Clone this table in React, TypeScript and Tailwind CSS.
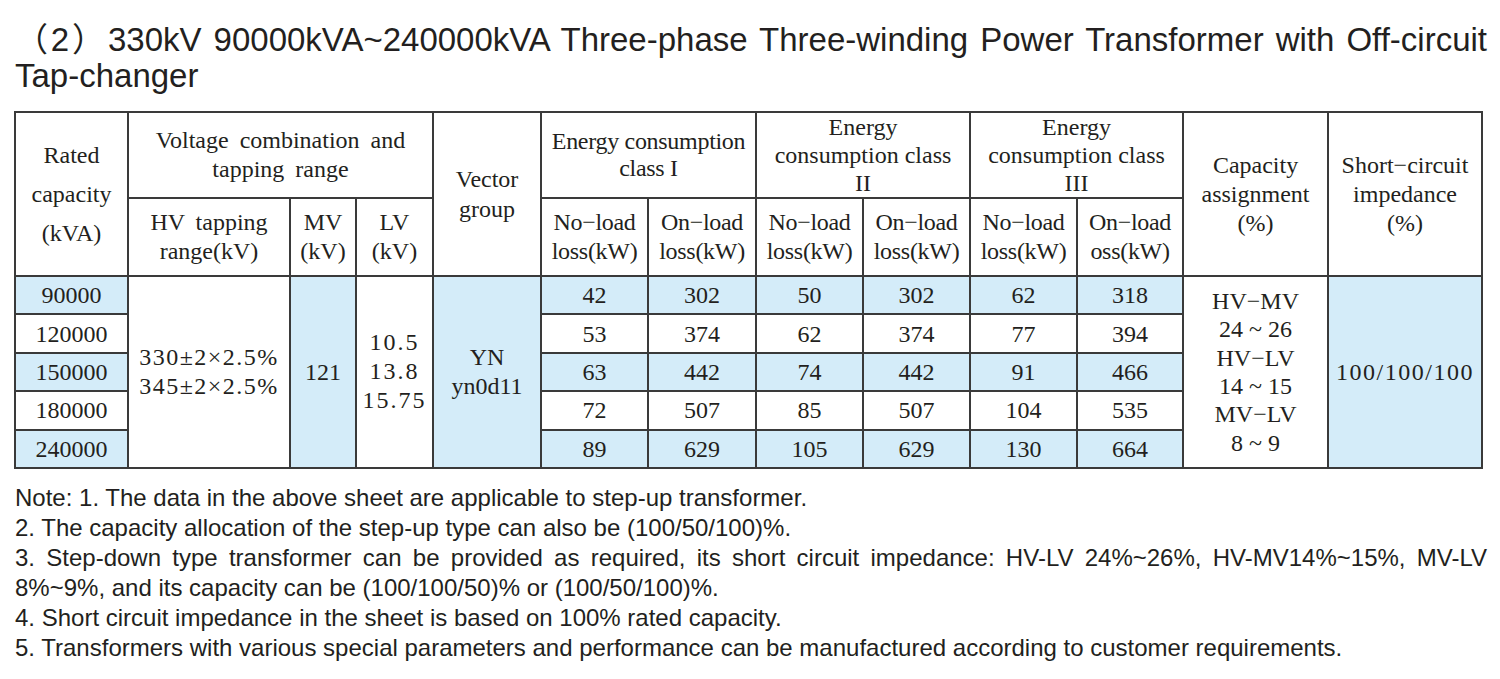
import React from "react"

const serif = "font-['Liberation_Serif','DejaVu_Serif',serif]"
const blue = "bg-[#d4ecf9]"
const cell = "border-2 border-[#3a3a3a] text-center align-middle p-0 font-normal"

const rows = [
  { cap: "90000", v: ["42", "302", "50", "302", "62", "318"] },
  { cap: "120000", v: ["53", "374", "62", "374", "77", "394"] },
  { cap: "150000", v: ["63", "442", "74", "442", "91", "466"] },
  { cap: "180000", v: ["72", "507", "85", "507", "104", "535"] },
  { cap: "240000", v: ["89", "629", "105", "629", "130", "664"] },
]

const widths = [113, 162, 66, 77, 108, 107, 108, 107, 107, 107, 106, 145, 154]

export default function App() {
  return (
    <div className="w-[1500px] h-[679px] bg-white text-[#231f20] pt-[22px] pl-[14px] pr-[13px]">
      <h1 className="font-['Liberation_Sans',Arial,'Noto_Sans_CJK_SC',sans-serif] text-[33px] leading-[36px] font-normal pl-[1px]">
        <span className="block text-justify [text-justify:inter-word] [text-align-last:justify]">
          （2）330kV 90000kVA~240000kVA Three-phase Three-winding Power Transformer with Off-circuit
        </span>
        <span className="block">Tap-changer</span>
      </h1>

      <table className={`mt-[17px] border-collapse table-fixed w-[1467px] ${serif} text-[24px]`}>
        <colgroup>
          {widths.map((w, i) => (
            <col key={i} style={{ width: w }} />
          ))}
        </colgroup>
        <thead>
          <tr className="h-[84px]">
            <th rowSpan={2} className={`${cell} leading-[39px]`}>
              Rated
              <br />
              capacity
              <br />
              (kVA)
            </th>
            <th colSpan={3} className={`${cell} leading-[29px] [word-spacing:5px]`}>
              Voltage combination and
              <br />
              tapping range
            </th>
            <th rowSpan={2} className={`${cell} leading-[30px]`}>
              Vector
              <br />
              group
            </th>
            <th colSpan={2} className={`${cell} leading-[27px] tracking-[-0.3px]`}>
              Energy consumption
              <br />
              class I
            </th>
            <th colSpan={2} className={`${cell} leading-[28px]`}>
              Energy
              <br />
              consumption class
              <br />
              II
            </th>
            <th colSpan={2} className={`${cell} leading-[28px]`}>
              Energy
              <br />
              consumption class
              <br />
              III
            </th>
            <th rowSpan={2} className={`${cell} leading-[29px]`}>
              Capacity
              <br />
              assignment
              <br />
              (%)
            </th>
            <th rowSpan={2} className={`${cell} leading-[29px]`}>
              Short−circuit
              <br />
              impedance
              <br />
              (%)
            </th>
          </tr>
          <tr className="h-[78px]">
            <th className={`${cell} leading-[29px] [word-spacing:5px]`}>
              HV tapping
              <br />
              range(kV)
            </th>
            <th className={`${cell} leading-[29px]`}>
              MV
              <br />
              (kV)
            </th>
            <th className={`${cell} leading-[29px]`}>
              LV
              <br />
              (kV)
            </th>
            {["loss(kW)", "loss(kW)", "loss(kW)", "loss(kW)", "loss(kW)", "oss(kW)"].map((l, i) => (
              <th key={i} className={`${cell} leading-[29px] tracking-[-0.3px]`}>
                {i % 2 === 0 ? "No−load" : "On−load"}
                <br />
                {l}
              </th>
            ))}
          </tr>
        </thead>
        <tbody>
          {rows.map((r, i) => {
            const bg = i % 2 === 0 ? blue : "bg-white"
            return (
              <tr key={r.cap} className="h-[38.4px]">
                <td className={`${cell} ${bg}`}>{r.cap}</td>
                {i === 0 && (
                  <>
                    <td rowSpan={5} className={`${cell} bg-white leading-[29px] tracking-[1.5px]`}>
                      330±2×2.5%
                      <br />
                      345±2×2.5%
                    </td>
                    <td rowSpan={5} className={`${cell} ${blue}`}>
                      121
                    </td>
                    <td rowSpan={5} className={`${cell} bg-white leading-[29px] tracking-[2px]`}>
                      10.5
                      <br />
                      13.8
                      <br />
                      15.75
                    </td>
                    <td rowSpan={5} className={`${cell} ${blue} leading-[29px]`}>
                      YN
                      <br />
                      yn0d11
                    </td>
                  </>
                )}
                {r.v.map((x, j) => (
                  <td key={j} className={`${cell} ${bg}`}>
                    {x}
                  </td>
                ))}
                {i === 0 && (
                  <>
                    <td rowSpan={5} className={`${cell} bg-white leading-[28.4px]`}>
                      HV−MV
                      <br />
                      24 ~ 26
                      <br />
                      HV−LV
                      <br />
                      14 ~ 15
                      <br />
                      MV−LV
                      <br />8 ~ 9
                    </td>
                    <td rowSpan={5} className={`${cell} ${blue} tracking-[1.5px]`}>
                      100/100/100
                    </td>
                  </>
                )}
              </tr>
            )
          })}
        </tbody>
      </table>

      <div className="mt-[14px] pl-[1px] font-['Liberation_Sans',Arial,sans-serif] text-[24px] leading-[30px]">
        <p>Note: 1. The data in the above sheet are applicable to step-up transformer.</p>
        <p>2. The capacity allocation of the step-up type can also be (100/50/100)%.</p>
        <p>
          <span className="block text-justify [text-align-last:justify]">
            3. Step-down type transformer can be provided as required, its short circuit impedance: HV-LV 24%~26%, HV-MV14%~15%, MV-LV
          </span>
          <span className="block">8%~9%, and its capacity can be (100/100/50)% or (100/50/100)%.</span>
        </p>
        <p>4. Short circuit impedance in the sheet is based on 100% rated capacity.</p>
        <p>5. Transformers with various special parameters and performance can be manufactured according to customer requirements.</p>
      </div>
    </div>
  )
}
